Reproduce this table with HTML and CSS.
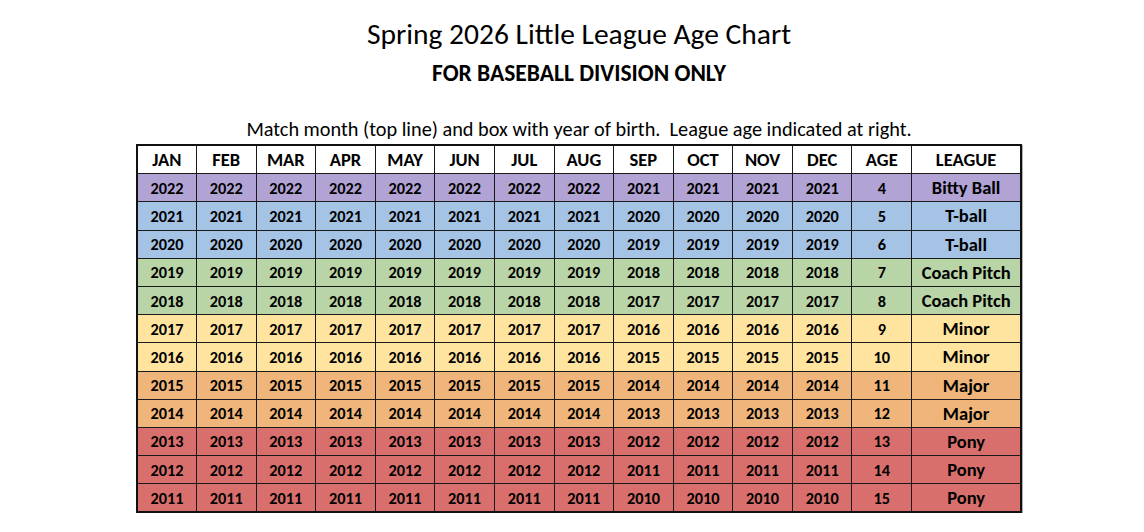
FILE: index.html
```html
<!DOCTYPE html>
<html>
<head>
<meta charset="utf-8">
<link rel="stylesheet" href="styles.css">
</head>
<body>
<div class="wrap">
  <h1 class="title">Spring 2026 Little League Age Chart</h1>
  <h2 class="subtitle">FOR BASEBALL DIVISION ONLY</h2>
  <p class="note">Match month (top line) and box with year of birth.&nbsp; League age indicated at right.</p>
  <table class="chart">
    <colgroup>
      <col class="m"><col class="m"><col class="m"><col class="m"><col class="m"><col class="m"><col class="m"><col class="m"><col class="m"><col class="m"><col class="m"><col class="m"><col class="m"><col class="lg">
    </colgroup>
    <thead>
      <tr><th>JAN</th><th>FEB</th><th>MAR</th><th>APR</th><th>MAY</th><th>JUN</th><th>JUL</th><th>AUG</th><th>SEP</th><th>OCT</th><th>NOV</th><th>DEC</th><th>AGE</th><th>LEAGUE</th></tr>
    </thead>
    <tbody>
      <tr class="purple"><td>2022</td><td>2022</td><td>2022</td><td>2022</td><td>2022</td><td>2022</td><td>2022</td><td>2022</td><td>2021</td><td>2021</td><td>2021</td><td>2021</td><td>4</td><td>Bitty Ball</td></tr>
      <tr class="blue"><td>2021</td><td>2021</td><td>2021</td><td>2021</td><td>2021</td><td>2021</td><td>2021</td><td>2021</td><td>2020</td><td>2020</td><td>2020</td><td>2020</td><td>5</td><td>T-ball</td></tr>
      <tr class="blue"><td>2020</td><td>2020</td><td>2020</td><td>2020</td><td>2020</td><td>2020</td><td>2020</td><td>2020</td><td>2019</td><td>2019</td><td>2019</td><td>2019</td><td>6</td><td>T-ball</td></tr>
      <tr class="green"><td>2019</td><td>2019</td><td>2019</td><td>2019</td><td>2019</td><td>2019</td><td>2019</td><td>2019</td><td>2018</td><td>2018</td><td>2018</td><td>2018</td><td>7</td><td>Coach Pitch</td></tr>
      <tr class="green"><td>2018</td><td>2018</td><td>2018</td><td>2018</td><td>2018</td><td>2018</td><td>2018</td><td>2018</td><td>2017</td><td>2017</td><td>2017</td><td>2017</td><td>8</td><td>Coach Pitch</td></tr>
      <tr class="yellow"><td>2017</td><td>2017</td><td>2017</td><td>2017</td><td>2017</td><td>2017</td><td>2017</td><td>2017</td><td>2016</td><td>2016</td><td>2016</td><td>2016</td><td>9</td><td>Minor</td></tr>
      <tr class="yellow"><td>2016</td><td>2016</td><td>2016</td><td>2016</td><td>2016</td><td>2016</td><td>2016</td><td>2016</td><td>2015</td><td>2015</td><td>2015</td><td>2015</td><td>10</td><td>Minor</td></tr>
      <tr class="orange"><td>2015</td><td>2015</td><td>2015</td><td>2015</td><td>2015</td><td>2015</td><td>2015</td><td>2015</td><td>2014</td><td>2014</td><td>2014</td><td>2014</td><td>11</td><td>Major</td></tr>
      <tr class="orange"><td>2014</td><td>2014</td><td>2014</td><td>2014</td><td>2014</td><td>2014</td><td>2014</td><td>2014</td><td>2013</td><td>2013</td><td>2013</td><td>2013</td><td>12</td><td>Major</td></tr>
      <tr class="red"><td>2013</td><td>2013</td><td>2013</td><td>2013</td><td>2013</td><td>2013</td><td>2013</td><td>2013</td><td>2012</td><td>2012</td><td>2012</td><td>2012</td><td>13</td><td>Pony</td></tr>
      <tr class="red"><td>2012</td><td>2012</td><td>2012</td><td>2012</td><td>2012</td><td>2012</td><td>2012</td><td>2012</td><td>2011</td><td>2011</td><td>2011</td><td>2011</td><td>14</td><td>Pony</td></tr>
      <tr class="red"><td>2011</td><td>2011</td><td>2011</td><td>2011</td><td>2011</td><td>2011</td><td>2011</td><td>2011</td><td>2010</td><td>2010</td><td>2010</td><td>2010</td><td>15</td><td>Pony</td></tr>
    </tbody>
  </table>
</div>
</body>
</html>
```
FILE: styles.css
```css
html, body {
  margin: 0;
  padding: 0;
  background: #ffffff;
}
body {
  font-family: "Carlito", "Lato", "Liberation Sans", sans-serif;
  color: #000;
}
.wrap {
  width: 884px;
  margin-left: 137px;
  padding-top: 16px;
  display: flex;
  flex-direction: column;
  align-items: center;
}
.title {
  margin: 0;
  font-size: 29.5px;
  font-weight: 400;
  line-height: 36px;
}
.subtitle {
  margin: 7px 0 0;
  font-size: 23.5px;
  font-weight: 700;
  line-height: 28px;
}
.note {
  margin: 30px 0 3px;
  font-size: 20.3px;
  line-height: 24px;
}
.chart {
  width: 884px;
  table-layout: fixed;
  border-collapse: collapse;
  border: 2px solid #111;
  box-shadow: 1px 1px 0 #b0b0b0;
  font-size: 18.5px;
  font-weight: 700;
  text-align: center;
}
.chart col.m { width: 59.6px; }
.chart col.lg { width: 109.6px; }
.chart th, .chart td {
  border: 1.6px solid #1a1a1a;
  height: 27.2px;
  padding: 0;
  font-weight: 700;
}
.chart td:nth-child(-n+13) {
  font-size: 16.3px;
}
.chart thead tr { background: #fff; }
.purple { background: #b1a3d4; }
.blue { background: #a5c3e5; }
.green { background: #b9d4a6; }
.yellow { background: #ffe49f; }
.orange { background: #efb57a; }
.red { background: #d86f6c; }
```
